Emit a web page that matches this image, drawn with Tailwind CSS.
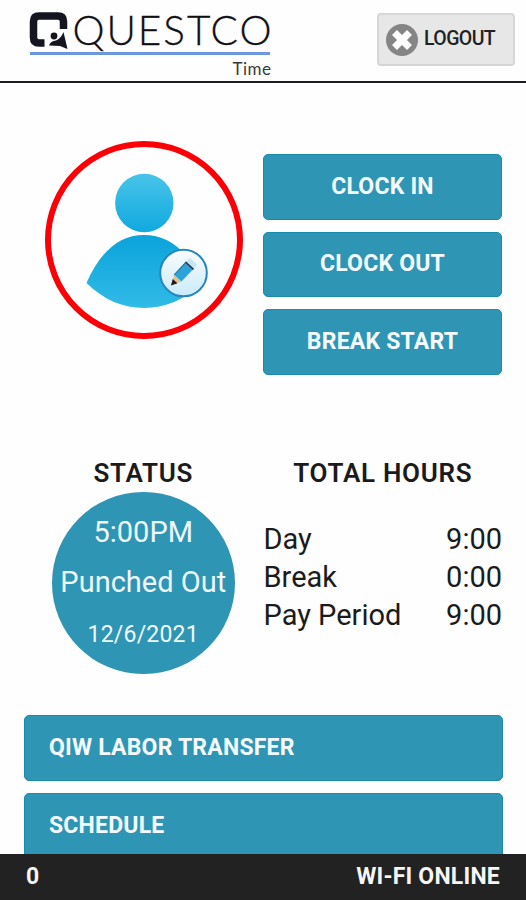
<!DOCTYPE html>
<html lang="en">
<head>
    <meta charset="UTF-8">
    <meta name="viewport" content="width=device-width, initial-scale=1.0">
    <title>Questco Time</title>
    <script src="https://cdn.jsdelivr.net/npm/@tailwindcss/browser@4"></script>
</head>
<body class="flex flex-col h-screen overflow-hidden bg-[#fefefe] text-[#1b1b1b] font-[Roboto,sans-serif]">
    <!-- Header -->
    <header class="flex justify-between items-start shrink-0 h-[83px] border-b-2 border-[#1c1c20] pl-[29px] pr-[11px]">
        <svg class="w-[250px] h-[81px] overflow-visible" viewBox="29 0 250 81" fill="none">
            <path d="M44.500 43H39Q33.500 43 33.500 37.500V21.500Q33.500 16 39 16H58Q63.500 16 63.500 21.500V29" stroke="#14151f" stroke-width="7.500"/>
            <circle cx="54" cy="36" r="3.400" fill="#14151f"/>
            <path d="M63.500 32L67.500 49L60 46L49 45.500Q50.500 41 56 40.500Q61 38.500 63.500 32Z" fill="#14151f"/>
            <text x="72.500" y="44.500" font-family="Lato, sans-serif" font-weight="300" font-size="40.500" textLength="199" lengthAdjust="spacing" fill="#101014" stroke="#101014" stroke-width=".3">QUESTCO</text>
            <path d="M30 53.500H270" stroke="#6c97da" stroke-width="3"/>
            <text x="232.500" y="75" font-family="Lato, sans-serif" font-size="17" textLength="38.500" lengthAdjust="spacing" fill="#3a3a3a">Time</text>
        </svg>
        <button class="flex items-center gap-1 mt-[13px] w-[138px] h-[53px] pl-[7px] rounded border-2 border-[#d6d6d6] bg-[#e7e7e7] text-[19.5px] font-medium text-[#222]">
            <svg class="w-8 h-8 shrink-0" viewBox="0 0 32 32">
                <circle cx="16" cy="16" r="16" fill="#858585"/>
                <path d="M8.500 8.500L23.500 23.500M23.500 8.500L8.500 23.500" stroke="#fff" stroke-width="7"/>
            </svg>
            <span class="pl-0.5 -mt-0.5 tracking-[-0.6px]">LOGOUT</span>
        </button>
    </header>

    <main class="flex-1 overflow-hidden px-6">
        <!-- Photo and punch buttons -->
        <section class="flex pt-[58px] pl-[21px]">
            <div class="w-[198px] h-[198px] rounded-full border-[6px] border-[#fb0007]">
                <svg class="w-[186px] h-[186px]" viewBox="51 147 186 186">
                    <defs>
                        <linearGradient id="head" x1="0" y1="0" x2="0" y2="1">
                            <stop offset="0" stop-color="#48c4ea"/>
                            <stop offset="1" stop-color="#10a9de"/>
                        </linearGradient>
                        <linearGradient id="torso" x1="0" y1="0" x2="0" y2="1">
                            <stop offset="0" stop-color="#0ba3da"/>
                            <stop offset="1" stop-color="#30bbe7"/>
                        </linearGradient>
                        <linearGradient id="badge" x1="0" y1="0" x2="0" y2="1">
                            <stop offset="0" stop-color="#fafcff"/>
                            <stop offset="1" stop-color="#c9ebfa"/>
                        </linearGradient>
                    </defs>
                    <circle cx="144.300" cy="203" r="29.200" fill="url(#head)"/>
                    <path d="M86.500 283C100 252 119 235 144 235C169 235 190 252 202 283C184 300 165 308 144 308C123 308 104 300 86.500 283Z" fill="url(#torso)"/>
                    <circle cx="183.500" cy="273" r="23.300" fill="url(#badge)" stroke="#2587bb" stroke-width="2"/>
                    <g transform="translate(171 285.500) rotate(-47)">
                        <path d="M0 0L10 -5V5Z" fill="#e6c18c"/>
                        <path d="M0 0L6 -3.200V3.200Z" fill="#1c1c1c"/>
                        <path d="M10 -5H26V5H10Z" fill="#2aa3da"/>
                        <path d="M10 -5H26" stroke="#176a9c" stroke-width="1"/>
                        <path d="M26 -5.500H28V5.500H26Z" fill="#27455c"/>
                        <path d="M28.500 -5H33V5H28.500Z" fill="#c5e6f5"/>
                    </g>
                </svg>
            </div>
            <div class="flex flex-col gap-3 w-60 ml-5 mt-[13px] text-[23px] font-bold tracking-[0.2px] text-[#f4fbff]">
                <button class="h-[65.5px] rounded-[5px] border border-[#1a8cab] bg-[#2f95b5]">CLOCK IN</button>
                <button class="h-[65.5px] rounded-[5px] border border-[#1a8cab] bg-[#2f95b5]">CLOCK OUT</button>
                <button class="h-[65.5px] rounded-[5px] border border-[#1a8cab] bg-[#2f95b5]">BREAK START</button>
            </div>
        </section>

        <!-- Status and hours -->
        <section class="flex mt-20">
            <div class="flex flex-col items-center w-[239px] text-center">
                <h2 class="text-[26px] leading-9 font-semibold tracking-[0.7px]">STATUS</h2>
                <div class="w-[182.5px] h-[182px] mt-px rounded-full bg-[#2f95b5] pt-5 text-[#eef8fc] whitespace-nowrap">
                    <p class="text-[29px] leading-10">5:00PM</p>
                    <p class="mt-2.5 text-[29px] leading-10">Punched Out</p>
                    <p class="mt-[15px] text-[23px] leading-9 tracking-[0.2px]">12/6/2021</p>
                </div>
            </div>
            <div class="w-60 pl-px">
                <h2 class="text-[26px] leading-9 font-semibold text-center tracking-[0.7px]">TOTAL HOURS</h2>
                <dl class="grid grid-cols-[1fr_auto] mt-[29px] text-[29px] leading-[38px]">
                    <dt>Day</dt><dd>9:00</dd>
                    <dt>Break</dt><dd>0:00</dd>
                    <dt>Pay Period</dt><dd>9:00</dd>
                </dl>
            </div>
        </section>

        <!-- Menu -->
        <nav class="flex flex-col gap-3 mt-[41px] w-[479px] text-[23px] font-bold tracking-[0.2px] text-[#f4fbff]">
            <a href="#" class="flex items-center h-[66px] pl-6 pt-px rounded-[5px] border border-[#1a8cab] bg-[#2f95b5]">QIW LABOR TRANSFER</a>
            <a href="#" class="flex items-center h-[66px] pl-6 pt-px rounded-[5px] border border-[#1a8cab] bg-[#2f95b5]">SCHEDULE</a>
        </nav>
    </main>

    <footer class="flex justify-between items-center shrink-0 h-[46px] px-[26px] bg-[#222] text-[23px] font-bold tracking-[0.2px] text-[#f5f5f5]">
        <span>0</span>
        <span>WI-FI ONLINE</span>
    </footer>
</body>
</html>
